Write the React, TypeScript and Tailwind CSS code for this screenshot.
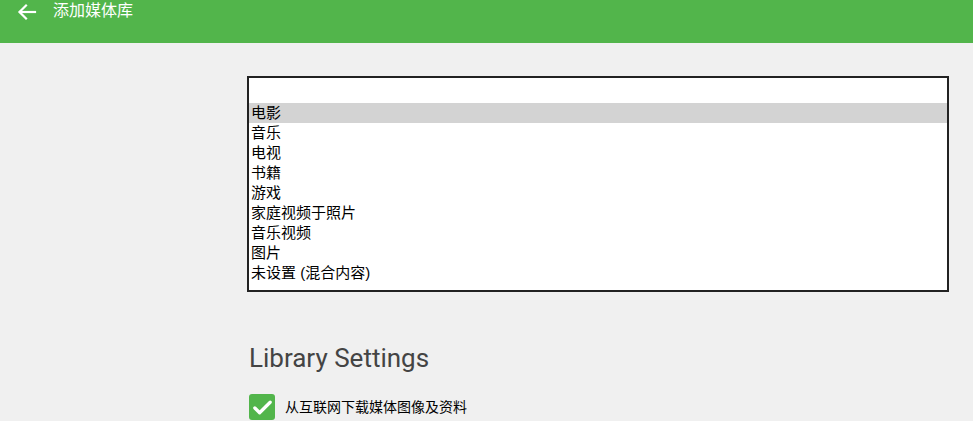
const types = ["电影", "音乐", "电视", "书籍", "游戏", "家庭视频于照片", "音乐视频", "图片", "未设置 (混合内容)"];

const cjk = { fontFamily: '"Liberation Sans", "Noto Sans CJK SC", sans-serif' };

export default function App() {
  return (
    <div className="h-[421px] overflow-hidden bg-[#f0f0f0]" style={cjk}>
      <header className="flex h-[43px] items-start bg-[#52b54b] pt-[1px] text-white">
        <svg className="ml-[17px] mt-[2px] h-[18px] w-[20px]" viewBox="0 0 20 18" fill="none" stroke="white" strokeWidth="2.2" strokeLinecap="square">
          <path d="M3 9h15" />
          <path d="M9 2.5L2.5 9L9 15.5" />
        </svg>
        <h1 className="ml-[16px] text-[16px] leading-[20px]">添加媒体库</h1>
      </header>

      <main className="ml-[247px] w-[702px] pt-[33px]">
        <div className="border-2 border-[#222] bg-white pb-[7px] pt-[25px]">
          {types.map((t, i) => (
            <div
              key={t}
              className={
                "h-[20px] pl-[2px] text-[15px] leading-[20px] text-black " +
                (i === 0 ? "bg-[#d3d3d3]" : "")
              }
            >
              {t}
            </div>
          ))}
        </div>

        <h2
          className="ml-[2px] mt-[50px] text-[26px] leading-[32px] text-[#444]"
          style={{ fontFamily: 'Roboto, "Noto Sans", sans-serif' }}
        >
          Library Settings
        </h2>

        <label className="ml-[2px] mt-[20px] flex items-center gap-[10px]">
          <span className="flex h-[26px] w-[26px] items-center justify-center rounded-[3px] bg-[#52b54b]">
            <svg viewBox="0 0 24 24" className="h-[23px] w-[23px]" fill="none" stroke="white" strokeWidth="3.4" strokeLinecap="round" strokeLinejoin="round">
              <path d="M4 12.5l5 5L20 6.5" />
            </svg>
          </span>
          <span className="text-[14px] text-black">从互联网下载媒体图像及资料</span>
        </label>
      </main>
    </div>
  );
}
